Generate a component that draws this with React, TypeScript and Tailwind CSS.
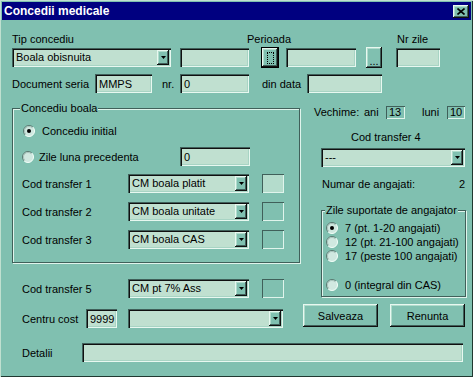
import React from "react";

const FIELD =
  "bg-[#c0e0d0] shadow-[inset_1px_1px_0_#40605a,inset_2px_2px_0_#101010,inset_-1px_-1px_0_#e8f8f0,inset_-2px_-2px_0_#a8d4c4]";
const RAISED =
  "bg-[#80c0b0] shadow-[inset_-1px_-1px_0_#101010,inset_1px_1px_0_#e8f8f0,inset_-2px_-2px_0_#40605a,inset_2px_2px_0_#b0dccc]";
const STATIC = "shadow-[inset_1px_1px_0_#40605a,inset_-1px_-1px_0_#e0f4ec]";
const GROUP =
  "relative border border-[#40605a] shadow-[1px_1px_0_#e0f4ec,inset_1px_1px_0_#e0f4ec]";

type BoxProps = { w: string; value?: string; className?: string };

function Field({ w, value, className = "" }: BoxProps) {
  return (
    <div className={`${FIELD} ${w} flex h-[19px] shrink-0 items-center pl-[4px] ${className}`}>
      {value}
    </div>
  );
}

function Arrow() {
  return (
    <svg width="5" height="3" viewBox="0 0 5 3">
      <path d="M0 0h5L2.5 3z" fill="#000" />
    </svg>
  );
}

function Combo({ w, value }: BoxProps) {
  return (
    <div className={`${FIELD} ${w} flex h-[19px] shrink-0 items-stretch p-[2px]`}>
      <span className="flex-1 truncate pl-[2px] leading-[15px]">{value}</span>
      <div className={`${RAISED} flex w-[12px] items-center justify-center`}>
        <Arrow />
      </div>
    </div>
  );
}

function SmallBox({ w, value, className = "" }: BoxProps) {
  return (
    <div className={`${STATIC} ${w} flex shrink-0 items-center pl-[3px] ${className}`}>
      {value}
    </div>
  );
}

function Radio({ checked = false }: { checked?: boolean }) {
  return (
    <svg width="12" height="12" viewBox="0 0 12 12" className="shrink-0">
      <circle cx="6" cy="6" r="5.5" fill="#d0e8e0" />
      <path d="M2.1 9.9A5.5 5.5 0 0 1 9.9 2.1" fill="none" stroke="#587870" />
      <path d="M2.8 9.2A4.5 4.5 0 0 1 9.2 2.8" fill="none" stroke="#a8c4bc" />
      <path d="M9.9 2.1A5.5 5.5 0 0 1 2.1 9.9" fill="none" stroke="#f4fffa" />
      {checked ? <circle cx="6" cy="6" r="2" fill="#000" /> : null}
    </svg>
  );
}

function RadioRow({ label, checked }: { label: string; checked?: boolean }) {
  return (
    <div className="flex h-[14px] items-center gap-[7px]">
      <Radio checked={checked} />
      <span>{label}</span>
    </div>
  );
}

function TransferRow({ label, value, light }: { label: string; value: string; light?: boolean }) {
  return (
    <div className="flex h-[19px] items-center">
      <span className="w-[106px] shrink-0">{label}</span>
      <Combo w="w-[121px]" value={value} />
      <SmallBox w="w-[22px]" className={`ml-[13px] h-[19px] ${light ? "bg-[#b4dccc]" : ""}`} />
    </div>
  );
}

export default function App() {
  return (
    <div
      className="h-[377px] w-[473px] overflow-hidden bg-[#80c0b0] p-[2px] text-[11px] leading-[14px] text-black shadow-[inset_1px_1px_0_#c0e0d0,inset_-1px_-1px_0_#203830]"
      style={{ fontFamily: '"Liberation Sans", Arial, sans-serif' }}
    >
      <div className="flex h-[18px] w-[469px] items-center justify-between bg-[#000080] pl-[2px] pr-[2px]">
        <span className="text-[12px] font-bold text-white">Concedii medicale</span>
        <div className={`${RAISED} flex h-[13px] w-[16px] items-center justify-center`}>
          <svg width="8" height="7" viewBox="0 0 8 7">
            <path d="M0.5 0.5l7 6M7.5 0.5l-7 6" stroke="#000" strokeWidth="1.6" />
          </svg>
        </div>
      </div>

      <div className="pl-[10px]">
        <div className="mt-[11px] flex h-[16px] items-center">
          <span className="w-[235px]">Tip concediu</span>
          <span className="w-[150px]">Perioada</span>
          <span>Nr zile</span>
        </div>

        <div className="flex h-[21px] items-center">
          <Combo w="w-[159px]" value="Boala obisnuita" />
          <Field w="w-[69px]" className="ml-[9px]" />
          <div className="ml-[12px] flex h-[21px] w-[18px] shrink-0 items-center justify-center border border-black">
            <div className={`${RAISED} flex h-full w-full items-center justify-center`}>
              <div className="h-[12px] w-[7px] border border-dotted border-black" />
            </div>
          </div>
          <Field w="w-[70px]" className="ml-[7px]" />
          <div className={`${RAISED} ml-[10px] flex h-[21px] w-[16px] shrink-0 items-end justify-center pb-[3px] leading-[8px]`}>
            ...
          </div>
          <Field w="w-[44px]" className="ml-[14px]" />
        </div>

        <div className="mt-[6px] flex h-[19px] items-center">
          <span className="w-[83px] shrink-0">Document seria</span>
          <Field w="w-[57px]" value="MMPS" />
          <span className="ml-[10px] w-[18px] shrink-0">nr.</span>
          <Field w="w-[69px]" value="0" />
          <span className="ml-[13px] w-[45px] shrink-0">din data</span>
          <Field w="w-[75px]" />
        </div>

        <div className="flex">
          <div className="w-[289px] shrink-0">
            <div className={`${GROUP} mt-[15px] h-[155px] w-[288px] pl-[9px]`}>
              <span className="absolute left-[7px] top-[-8px] bg-[#80c0b0] px-[1px]">Concediu boala</span>
              <div className="ml-[1px] mt-[15px]">
                <RadioRow label="Concediu initial" checked />
              </div>
              <div className="mt-[9px] flex h-[19px] items-center">
                <Radio />
                <span className="ml-[5px] w-[141px] shrink-0">Zile luna precedenta</span>
                <Field w="w-[70px]" value="0" />
              </div>
              <div className="mt-[8px] flex flex-col gap-[9px]">
                <TransferRow label="Cod transfer 1" value="CM boala platit" light />
                <TransferRow label="Cod transfer 2" value="CM boala unitate" />
                <TransferRow label="Cod transfer 3" value="CM boala CAS" />
              </div>
            </div>

            <div className="mt-[16px] pl-[10px]">
              <TransferRow label="Cod transfer 5" value="CM pt 7% Ass" />
            </div>

            <div className="mt-[11px] flex h-[19px] items-center pl-[10px]">
              <span className="w-[64px] shrink-0">Centru cost</span>
              <Field w="w-[31px]" value="9999" className="pl-[3px]" />
              <div className="ml-[11px]">
                <Combo w="w-[155px]" value="" />
              </div>
            </div>
          </div>

          <div className="ml-[2px] w-[162px] shrink-0">
            <div className="mt-[12px] flex h-[14px] items-center pl-[11px]">
              <span className="w-[50px] shrink-0">Vechime:</span>
              <span className="w-[22px] shrink-0">ani</span>
              <SmallBox w="w-[19px]" value="13" className="h-[13px]" />
              <span className="ml-[17px] w-[25px] shrink-0">luni</span>
              <SmallBox w="w-[18px]" value="10" className="h-[13px]" />
            </div>

            <div className="mt-[11px] h-[14px] pl-[48px]">Cod transfer 4</div>

            <div className="ml-[18px] mt-[4px]">
              <Combo w="w-[144px]" value="---" />
            </div>

            <div className="ml-[19px] mt-[10px] flex h-[14px] w-[143px] items-center justify-between">
              <span>Numar de angajati:</span>
              <span>2</span>
            </div>

            <div className={`${GROUP} ml-[18px] mt-[19px] h-[87px] w-[145px] pl-[4px]`}>
              <span className="absolute left-[3px] top-[-8px] bg-[#80c0b0] px-[1px]">
                Zile suportate de angajator
              </span>
              <div className="mt-[10px]">
                <RadioRow label="7 (pt. 1-20 angajati)" checked />
                <RadioRow label="12 (pt. 21-100 angajati)" />
                <RadioRow label="17 (peste 100 angajati)" />
              </div>
              <div className="mt-[15px]">
                <RadioRow label="0 (integral din CAS)" />
              </div>
            </div>

            <div className="mt-[7px] flex">
              <button type="button" className={`${RAISED} h-[23px] w-[75px]`}>
                Salveaza
              </button>
              <button type="button" className={`${RAISED} ml-[12px] h-[23px] w-[75px]`}>
                Renunta
              </button>
            </div>
          </div>
        </div>

        <div className="mt-[15px] flex h-[19px] items-center pl-[10px]">
          <span className="w-[60px] shrink-0">Detalii</span>
          <Field w="w-[381px]" />
        </div>
      </div>
    </div>
  );
}
